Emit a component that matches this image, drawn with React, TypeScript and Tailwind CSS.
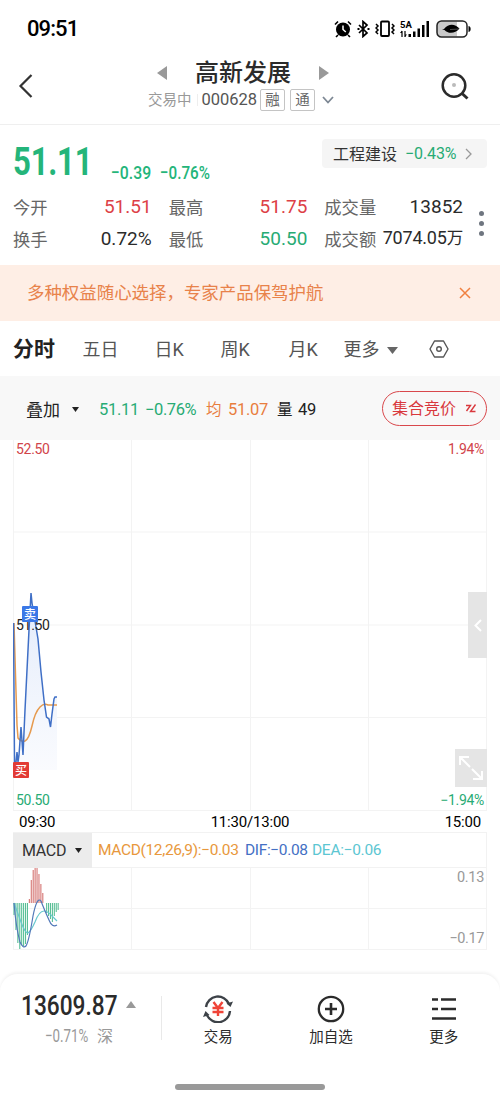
import type { ReactNode } from "react";

const tabs = [
  { label: "五日", width: "w-[72px]" },
  { label: "日K", width: "w-[66px]" },
  { label: "周K", width: "w-[68px]" },
  { label: "月K", width: "w-[55px]" },
];

const quotes = [
  { label: "今开", value: "51.51", color: "text-[#dd3f46]" },
  { label: "最高", value: "51.75", color: "text-[#dd3f46]" },
  { label: "成交量", value: "13852", color: "text-[#2b2b2b]" },
  { label: "换手", value: "0.72%", color: "text-[#2b2b2b]" },
  { label: "最低", value: "50.50", color: "text-[#27ab74]" },
  { label: "成交额", value: "7074.05", unit: "万", color: "text-[#2b2b2b]" },
];

// Histogram heights in px, one bar per minute; positive is drawn upwards
const macdBars = [
  -12, -27, -40, -46, -42, -43, -41, -32, 4, 23, 33, 35, 35, 29, 19, 10, 0, -10, -13, -16, -19, -13, -9, -7,
];

const price =
  "0.5,183 1.5,322 2.5,327 4,312 5,322 6,315 8,287 10,315 12,270 16,190 18,153 19,163 22,181 25,199 28,232 31,260 33.5,277 36,279 37.5,287 39,274 41,259 42,257 44,257";

function StatusBar() {
  return (
    <div className="flex h-14 items-center justify-between pl-[27px] pr-[28px]">
      <div className="mt-0.5 text-[22px] font-medium leading-none tracking-[-0.9px] text-black">09:51</div>
      <div className="mt-0.5 flex items-center text-black">
        <svg width="18" height="18" viewBox="0 0 18 18" fill="none" stroke="currentColor">
          <circle cx="9" cy="9.5" r="7" fill="currentColor" stroke="none" />
          <path d="M1 4.5 4 1.5M14 1.5l3 3M4 15l-2 2M14 15l2 2" strokeWidth="1.6" />
          <path d="M9 5.5v4l2.8 2.5" stroke="#fff" strokeWidth="1.5" />
        </svg>
        <svg className="ml-[5px]" width="13" height="18" viewBox="0 0 13 18" fill="none" stroke="currentColor" strokeWidth="1.7">
          <path d="m2 5 8 8-4 3.5v-15L10 5l-8 8" />
          <path d="M.5 9h2M10.5 9h2" strokeWidth="2" />
        </svg>
        <svg className="ml-[5px]" width="20" height="18" viewBox="0 0 20 18" fill="none" stroke="currentColor">
          <rect x="6" y="1.5" width="8" height="14.5" rx="1" strokeWidth="1.8" />
          <path d="m1 4 2 2-2 2 2 2-2 2 2 2M17 4l2 2-2 2 2 2-2 2 2 2" strokeWidth="1.5" />
        </svg>
        <svg className="ml-[5px]" width="30" height="18" viewBox="0 0 30 18" fill="currentColor">
          <text x="0" y="8" fontSize="9.5" fontWeight="700" fontFamily="Roboto">5A</text>
          <path d="M2 11v6M5 11v6" stroke="currentColor" strokeWidth="1.2" />
          <path d="m0 13 2-2.5V13zM7 14.5 5 17v-2.5z" />
          <path d="M8.5 14H11v3H8.500zM13 11.500h2.500V17H13zM17.500 8.500H20V17h-2.500zM22 5h2.500v12H22zM26.500 1H29v16h-2.500z" />
        </svg>
        <svg className="ml-[6px]" width="36" height="18" viewBox="0 0 36 18">
          <path d="M5 1.500h16v15H5a4 4 0 0 1-4-4v-7a4 4 0 0 1 4-4" fill="#c9c9c9" />
          <rect x="1" y="1" width="30" height="16" rx="4.500" fill="none" stroke="#222" strokeWidth="1.500" />
          <path d="M33 6.500c1.500.5 1.500 4.500 0 5z" fill="#000" stroke="#000" />
          <path d="M8 9c5-6 11-5 15.500-.5C19 14 12 14 8.500 10L6 9.500z" fill="#000" />
          <path d="M14 9.500 23 9" stroke="#888" strokeWidth=".6" />
        </svg>
      </div>
    </div>
  );
}

function Header() {
  return (
    <header className="flex h-[69px] justify-between border-b border-[#efefef] pl-[18px] pr-[31px]">
      <svg className="mt-[18px]" width="15" height="24" viewBox="0 0 15 24" fill="none" stroke="#333" strokeWidth="2.2">
        <path d="M13.500 1 2.500 12l11 11" />
      </svg>
      <div className="ml-2 flex w-[190px] flex-col items-center pt-px">
        <div className="ml-1 flex h-[32px] items-center gap-[28px]">
          <svg width="10" height="14" viewBox="0 0 10 14" fill="#999"><path d="M10 0v14L0 7z" /></svg>
          <h1 className="text-[24px] font-medium leading-none text-[#2b2b2b]">高新发展</h1>
          <svg width="10" height="14" viewBox="0 0 10 14" fill="#999"><path d="M0 0v14l10-7z" /></svg>
        </div>
        <div className="flex items-center whitespace-nowrap leading-none">
          <span className="mt-0.5 text-[14.500px] text-[#999]">交易中</span>
          <span className="ml-[6px] h-3 w-px bg-[#eee]" />
          <span className="ml-[3px] text-[16.500px] text-[#555]">000628</span>
          <span className="ml-[3px] flex h-[22px] w-[25px] items-center justify-center rounded-[2px] border border-[#c4c4c4] pt-0.5 text-[14.500px] text-[#666]">融</span>
          <span className="ml-[5px] flex h-[22px] w-[25px] items-center justify-center rounded-[2px] border border-[#c4c4c4] pt-0.5 text-[14.500px] text-[#666]">通</span>
          <svg className="ml-[7px]" width="12" height="8" viewBox="0 0 12 8" fill="none" stroke="#7d8894" strokeWidth="1.8">
            <path d="m1 1 5 5.500L11 1" />
          </svg>
        </div>
      </div>
      <svg className="mt-[16px]" width="28" height="28" viewBox="0 0 28 28" fill="none" stroke="#2b2b2b">
        <circle cx="13" cy="13.500" r="11.300" strokeWidth="2.500" />
        <path d="m20.500 21 6 5.500" strokeWidth="3" />
        <circle cx="13" cy="13" r="2" fill="#bbb" stroke="none" />
      </svg>
    </header>
  );
}

function Quote() {
  return (
    <section className="h-[140px] px-[13px] pt-[14px]">
      <div className="flex h-[51px] justify-between">
        <div className="flex">
          <div className="mt-[4px] w-[98px] origin-left scale-x-[0.82] text-[38px] font-bold leading-[38px] tracking-[-0.3px] text-[#24b57a]">
            51.11
          </div>
          <div className="mt-[23px] w-[49px] origin-left scale-x-[0.83] text-[19px] font-medium leading-[22px] text-[#24b57a]">
            −0.39
          </div>
          <div className="mt-[23px] origin-left scale-x-[0.8] text-[19px] font-medium leading-[22px] text-[#24b57a]">−0.76%</div>
        </div>
        <div className="flex h-[29px] w-[165px] items-center rounded-[4px] bg-[#f5f5f5] pl-[11px] leading-none">
          <span className="mt-0.5 text-[16px] text-[#333]">工程建设</span>
          <span className="ml-[8px] w-[53px] text-[16px] tracking-[-0.1px] text-[#27ab74]">−0.43%</span>
          <svg className="ml-[7px]" width="7" height="12" viewBox="0 0 7 12" fill="none" stroke="#999" strokeWidth="1.3">
            <path d="m1 1 5 5-5 5" />
          </svg>
        </div>
      </div>
      <div className="flex items-center">
        <div className="grid w-[450px] grid-cols-3 gap-x-[17px]">
          {quotes.map((q) => (
            <div key={q.label} className="flex h-8 items-center justify-between whitespace-nowrap leading-none">
              <span className="mt-[5px] text-[17.300px] text-[#666]">{q.label}</span>
              {q.unit ? (
                <span className={`mt-px text-[18px] tracking-[-0.2px] ${q.color}`}>
                  {q.value}
                  <span className="text-[16.500px]">{q.unit}</span>
                </span>
              ) : (
                <span className={`mt-px text-[19px] ${q.color}`}>{q.value}</span>
              )}
            </div>
          ))}
        </div>
        <div className="ml-[15.500px] mt-[3px] flex flex-col gap-[5px]">
          <span className="size-[5px] rounded-full bg-[#6f7680]" />
          <span className="size-[5px] rounded-full bg-[#6f7680]" />
          <span className="size-[5px] rounded-full bg-[#6f7680]" />
        </div>
      </div>
    </section>
  );
}

function Banner() {
  return (
    <div className="flex h-14 items-center justify-between bg-[#feeee5] pl-[27px] pr-[29px]">
      <span className="mt-0.5 whitespace-nowrap text-[17.450px] leading-none text-[#e8824a]">多种权益随心选择，专家产品保驾护航</span>
      <svg width="12" height="12" viewBox="0 0 12 12" fill="none" stroke="#f08040" strokeWidth="1.500">
        <path d="m1 1 10 10M11 1 1 11" />
      </svg>
    </div>
  );
}

function Tabs() {
  return (
    <nav className="flex h-[55px] items-center pl-[13px] text-[18px] leading-none text-[#555]">
      <span className="mt-0.5 w-[69.500px] text-[21px] font-bold text-[#222]">分时</span>
      {tabs.map((t) => (
        <span key={t.label} className={`mt-0.5 ${t.width}`}>{t.label}</span>
      ))}
      <span className="mt-0.5 flex w-[85px] items-center gap-[7px]">
        更多
        <svg className="mt-0.5" width="11" height="7" viewBox="0 0 11 7" fill="#666"><path d="M0 0h11L5.500 7z" /></svg>
      </span>
      <svg width="20" height="18" viewBox="0 0 20 18" fill="none" stroke="#555" strokeWidth="1.400">
        <path d="M5.500 1h9L19 9l-4.500 8h-9L1 9z" strokeLinejoin="round" />
        <circle cx="10" cy="9" r="2.300" />
      </svg>
    </nav>
  );
}

function OverlayRow() {
  return (
    <div className="flex h-16 items-center whitespace-nowrap bg-[#f8f8f8] pl-[26px] pr-[13px] text-[16.500px] leading-none">
      <span className="mt-[5px] text-[17px] text-[#222]">叠加</span>
      <svg className="ml-[12px] mt-0.5" width="7" height="5" viewBox="0 0 7 5" fill="#222"><path d="M0 0h7L3.500 5z" /></svg>
      <span className="ml-[20px] mt-1 w-[46px] tracking-[-0.3px] text-[#27ab74]">51.11</span>
      <span className="mt-1 w-[61px] tracking-[-0.4px] text-[#27ab74]">−0.76%</span>
      <span className="mt-[5px] w-[22px] text-[15.500px] text-[#e87d3e]">均</span>
      <span className="mt-1 w-[49px] tracking-[-0.3px] text-[#e87d3e]">51.07</span>
      <span className="mt-[5px] w-[21px] text-[15.500px] text-[#222]">量</span>
      <span className="mt-1 tracking-[-0.3px] text-[#222]">49</span>
      <button type="button" className="ml-auto flex h-[35px] w-[105px] items-center rounded-full border border-[#d9484c] pl-[9px] text-[16px] text-[#d9383d]">
        <span className="mt-0.5">集合竞价</span>
        <svg className="ml-[9px]" width="12" height="11" viewBox="0 0 12 11" fill="none" stroke="#d9383d" strokeWidth="1.400">
          <path d="M1 2.500h4.500L1.500 8M10.500 1.500 5.500 8.500h5" />
        </svg>
      </button>
    </div>
  );
}

function Marker({ className, children }: { className: string; children: ReactNode }) {
  return (
    <span className={`absolute flex size-4 items-center justify-center rounded-[1px] pt-px text-[12px] font-medium leading-none text-white ${className}`}>
      {children}
    </span>
  );
}

function PriceChart() {
  return (
    <section className="relative mx-[13px] h-[371px] text-[14px] leading-none">
      <svg width="474" height="371" viewBox="0 0 474 371" fill="none">
        <defs>
          <linearGradient id="area" x1="0" y1="0" x2="0" y2="1">
            <stop offset="0" stopColor="#e4ecfb" />
            <stop offset="1" stopColor="#fafbfe" />
          </linearGradient>
        </defs>
        <path d="M.5 0v371M118.500 0v371M237.500 0v371M355.500 0v371M473.500 0v371M0 92h474M0 185h474M0 277.500h474M0 370.500h474" stroke="#f3f3f3" />
        <polygon points={`0,330 ${price} 44,330`} fill="url(#area)" />
        <path d="M1 183 2.500 235 4 285 5 298Q8 302 12 301 16 299 19 286 22 272 27 267 31 263 35 265H44" stroke="#e69a4e" strokeWidth="1.500" />
        <polyline points={price} stroke="#3f6fc6" strokeWidth="1.500" />
      </svg>
      <span className="absolute left-[3px] top-[2px] tracking-[-0.3px] text-[#d1444a]">52.50</span>
      <span className="absolute right-[3px] top-[2px] tracking-[-0.3px] text-[#d1444a]">1.94%</span>
      <span className="absolute left-[3px] top-[178px] tracking-[-0.3px] text-[#222]">51.50</span>
      <span className="absolute left-[3px] top-[353px] tracking-[-0.3px] text-[#27ab74]">50.50</span>
      <span className="absolute right-[3px] top-[353px] tracking-[-0.3px] text-[#27ab74]">−1.94%</span>
      <Marker className="left-[9px] top-[166px] bg-[#3b78e7]">卖</Marker>
      <Marker className="left-0 top-[322px] bg-[#e23b35]">买</Marker>
      <span className="absolute right-0 top-[152px] flex h-[66px] w-[19px] items-center justify-center bg-[#e5e5e5]">
        <svg width="8" height="13" viewBox="0 0 8 13" fill="none" stroke="#fff" strokeWidth="2"><path d="M7 1 1.500 6.500 7 12" /></svg>
      </span>
      <span className="absolute right-0 top-[309px] flex h-[38px] w-[32px] items-center justify-center bg-[#e5e5e5]">
        <svg width="26" height="26" viewBox="0 0 26 26" fill="none" stroke="#fff" strokeWidth="2">
          <path d="M2 10V2h9M2 2l10 10M24 16v8h-9M24 24 14 14" />
        </svg>
      </span>
    </section>
  );
}

function MacdChart() {
  return (
    <section className="mx-[13px]">
      <div className="flex h-[22px] items-center justify-between border-b border-[#f2f2f2] px-[6px] pt-px text-[15px] leading-none tracking-[-0.2px] text-black">
        <span>09:30</span>
        <span>11:30/13:00</span>
        <span>15:00</span>
      </div>
      <div className="flex h-[35px] items-center whitespace-nowrap border-b border-r border-[#f2f2f2] text-[15.500px] leading-none">
        <span className="flex h-[35px] w-[79px] items-center bg-[#ececec] pl-[9px] pt-px text-[16px] tracking-[-0.3px] text-[#333]">
          MACD
          <svg className="ml-[9px]" width="7" height="5" viewBox="0 0 7 5" fill="#222"><path d="M0 0h7L3.500 5z" /></svg>
        </span>
        <span className="ml-[6px] mt-0.5 w-[147px] tracking-[-0.35px] text-[#e8983c]">MACD(12,26,9):−0.03</span>
        <span className="mt-0.5 w-[67px] tracking-[-0.35px] text-[#4470c4]">DIF:−0.08</span>
        <span className="mt-0.5 tracking-[-0.3px] text-[#5cc6d2]">DEA:−0.06</span>
      </div>
      <div className="relative h-[82px] text-[14.500px] leading-none text-[#999]">
        <svg width="474" height="82" viewBox="0 0 474 82" fill="none">
          <path d="M.5 0v82M118.500 0v82M237.500 0v82M355.500 0v82M473.500 0v82M0 40.500h474M0 81.500h474" stroke="#f3f3f3" />
          {macdBars.map((h, i) => (
            <path key={i} d={`M${1 + i * 1.92} 35v${-h}`} stroke={h > 0 ? "#d57472" : "#58bf95"} strokeWidth="1.100" />
          ))}
          <path d="M1 35Q4 43 8 54 12 65 15 65 18 63 22 54 26 43 31 43 35 43 40 49L44 53" stroke="#68c8ce" strokeWidth="1.200" />
          <path d="M1 35Q3 60 7 74 10 81 13 78 16 73 20 48 24 28 28 33 31 41 36 52 39 60 44 57" stroke="#5379b9" strokeWidth="1.200" />
        </svg>
        <span className="absolute right-[3px] top-[3px] tracking-[-0.3px]">0.13</span>
        <span className="absolute right-[3px] top-[64px] tracking-[-0.4px]">−0.17</span>
      </div>
    </section>
  );
}

function Action({ label, children }: { label: string; children: ReactNode }) {
  return (
    <button type="button" className="flex flex-1 flex-col items-center text-[14.500px] leading-none text-[#2b2b2b]">
      <span className="flex h-[30px] items-center">{children}</span>
      <span className="mt-[7px]">{label}</span>
    </button>
  );
}

function Footer() {
  return (
    <footer className="mt-6 h-[125px] rounded-t-[18px] bg-white pt-5 shadow-[0_-2px_3px_rgba(0,0,0,0.05)]">
      <div className="flex h-[70px]">
        <div className="w-[161px] pl-[21px]">
          <div className="flex h-6 items-center">
            <span className="mt-px w-[105px] origin-left scale-x-[0.84] text-[27px] font-medium leading-none text-[#2b2b2b]">13609.87</span>
            <svg className="-mt-1" width="10" height="7" viewBox="0 0 10 7" fill="#999"><path d="M5 0 10 7H0z" /></svg>
          </div>
          <div className="mt-[7px] flex h-[22px] items-center pl-[24px] leading-none text-[#999]">
            <span className="w-[52px] origin-left scale-x-[0.72] text-[18.500px]">−0.71%</span>
            <span className="mt-0.5 text-[16px]">深</span>
          </div>
        </div>
        <div className="mt-[2px] h-[44px] w-px bg-[#e9e9e9]" />
        <div className="flex flex-1">
          <Action label="交易">
            <svg width="30" height="28" viewBox="0 0 30 28" fill="none">
              <path d="M3 12A12 12 0 0 1 26 9M27 16A12 12 0 0 1 4 20" stroke="#3d4248" strokeWidth="2.400" />
              <path d="M30 6.500 27.500 12l-4-3.500zM0 22l2.500-6 4 4z" fill="#3d4248" />
              <path d="m10.500 7 4.500 6 4.500-6M9.500 13h11M9.500 17h11M15 13v8" stroke="#f04438" strokeWidth="2.400" />
            </svg>
          </Action>
          <Action label="加自选">
            <svg width="28" height="28" viewBox="0 0 28 28" fill="none" stroke="#2b2b2b" strokeWidth="2.300">
              <circle cx="14" cy="14" r="12.200" />
              <path d="M8 14h12M14 8v12" strokeWidth="2.600" />
            </svg>
          </Action>
          <Action label="更多">
            <svg width="24" height="24" viewBox="0 0 24 24" stroke="#2b2b2b" strokeWidth="2.500">
              <path d="M0 2.500h6M9 2.500h15M0 12h6M9 12h15M0 21.500h24" />
            </svg>
          </Action>
        </div>
      </div>
      <div className="mx-auto mt-5 h-[6px] w-[150px] rounded-full bg-[#999]" />
    </footer>
  );
}

export default function App() {
  return (
    <div className="h-[1099px] w-[500px] overflow-hidden bg-white font-[Roboto,'Noto_Sans_CJK_SC',sans-serif]">
      <StatusBar />
      <Header />
      <Quote />
      <Banner />
      <Tabs />
      <OverlayRow />
      <PriceChart />
      <MacdChart />
      <Footer />
    </div>
  );
}
